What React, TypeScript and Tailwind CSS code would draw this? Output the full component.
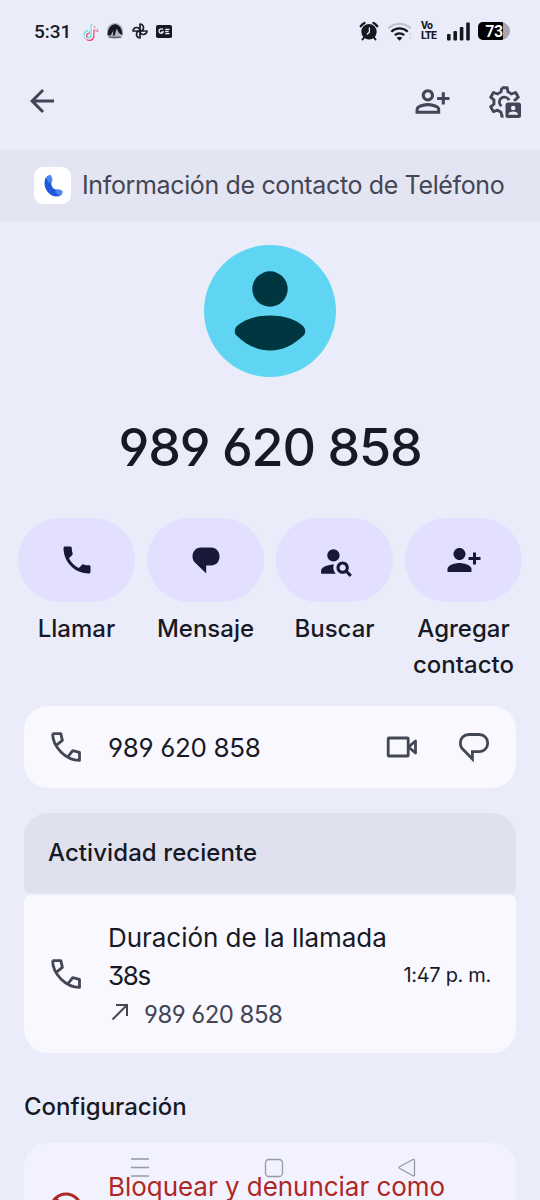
import type { ReactNode } from "react";
import {
  MdArrowBack,
  MdOutlinePersonAddAlt,
  MdPersonAddAlt1,
  MdPersonSearch,
  MdPhone,
} from "react-icons/md";

function TikTokGlyph() {
  const note = "M9.2 2v10.2a3.6 3.6 0 1 1-3.6-3.6M9.2 2c.3 2.8 2.2 4.4 4.8 4.5";
  return (
    <svg width="17" height="19" viewBox="0 0 17 19" fill="none" strokeWidth="2.3">
      <path d={note} stroke="#5fe3e6" transform="translate(0.5 .6)" />
      <path d={note} stroke="#f0476f" transform="translate(2.1 2.1)" />
      <path d={note} stroke="#f7f7fd" strokeWidth="1.5" transform="translate(1.3 1.3)" />
    </svg>
  );
}

function MountainGlyph() {
  return (
    <svg width="18" height="18" viewBox="0 0 18 18">
      <circle cx="9" cy="9" r="8" fill="#b3b5c1" />
      <path d="M1.5 13.5C1.5 7.5 4.5 2.3 9 2.3S16.5 7.5 16.5 13.5L13 11 10.6 6.5 8.7 13.5H6.8L7.5 8.5 4.5 13.5z" fill="#16171f" />
      <path d="M2.5 15.2h13" stroke="#3c3e49" strokeWidth="1" />
    </svg>
  );
}

function PinwheelGlyph() {
  const blade = "M9 9V2a3.5 3.5 0 0 1 3.5 3.5C12.5 7.6 11 9 9 9z";
  return (
    <svg width="18" height="18" viewBox="0 0 18 18" fill="none" stroke="#1b1c27" strokeWidth="1.7" strokeLinejoin="round">
      <path d={blade} />
      <path d={blade} transform="rotate(90 9 9)" />
      <path d={blade} transform="rotate(180 9 9)" />
      <path d={blade} transform="rotate(270 9 9)" />
    </svg>
  );
}

function NewsGlyph() {
  return (
    <svg width="16" height="13" viewBox="0 0 16 13" fill="none" stroke="#ebecf9" strokeWidth="1.3">
      <rect width="16" height="13" rx="1.8" fill="#171821" stroke="none" />
      <path d="M7 4.7A2.2 2.2 0 1 0 7.3 6.8H5.3M9.2 4.3h4.3M9.2 6.5h3.5M9.2 8.7h4.3" />
    </svg>
  );
}

function AlarmGlyph() {
  return (
    <svg width="20" height="20" viewBox="0 0 20 20" fill="none" stroke="#17181f" strokeLinecap="round">
      <circle cx="10" cy="10.8" r="7.7" fill="#17181f" stroke="none" />
      <path d="M1.7 5.2A13 13 0 0 1 5.5 1.9M18.3 5.2A13 13 0 0 0 14.5 1.9" strokeWidth="2.3" />
      <path d="M5 16.5l-1.5 2M15 16.5l1.5 2" strokeWidth="2" />
      <path d="M10.4 7v4.3L8.3 13" stroke="#ebecf9" strokeWidth="1.3" />
    </svg>
  );
}

function WifiGlyph() {
  return (
    <svg width="26" height="19" viewBox="0 0 26 19" fill="none" strokeWidth="2.3">
      <path d="M1.3 6.5C7.5.3 17.5.3 23.7 6.5" stroke="#c3c4d2" />
      <path d="M4.3 9.7c4.5-4.5 11.9-4.5 16.4 0" stroke="#17181f" />
      <path d="M7.8 13.3c2.6-2.6 6.8-2.6 9.4 0" stroke="#17181f" />
      <path d="M9.6 15.8c1.8-1.5 4-1.5 5.8 0l-2.9 3z" fill="#17181f" />
      <path d="M22 12.5l1.5-1.5 1.5 1.5zM22 15.5l1.5 1.5 1.5-1.5z" fill="#c3c4d2" />
    </svg>
  );
}

function SignalGlyph() {
  return (
    <svg width="23" height="19" viewBox="0 0 23 19" fill="#17181f">
      <rect y="12" width="3.6" height="6.5" rx="1" />
      <rect x="6.4" y="9" width="3.6" height="9.5" rx="1" />
      <rect x="12.8" y="5" width="3.6" height="13.5" rx="1" />
      <rect x="19.2" y="0.5" width="3.6" height="18" rx="1" />
    </svg>
  );
}

function Battery() {
  return (
    <div className="relative flex h-[18px] w-8 items-center justify-center overflow-hidden rounded-l-[5px] rounded-r-[9px] bg-[#a5a6b2]">
      <div className="absolute inset-y-0 left-0 w-[25px] bg-black" />
      <span className="relative pt-px font-['Roboto'] text-[16px] leading-none font-semibold tracking-[-0.5px] text-white">73</span>
    </div>
  );
}

function ContactSettingsIcon() {
  return (
    <svg width="34" height="34" viewBox="0 0 34 34" fill="none">
      <path
        d="M13.8 2.8h5.4l.8 4.2a10 10 0 0 1 3.4 2l4.2-1.5 2.7 4.7-3.4 2.9a10 10 0 0 1 .2 3.5M13.8 2.8l-.8 4.2a10 10 0 0 0-3.4 2L5.4 7.5 2.7 12.2l3.4 2.9a10 10 0 0 0 0 3.9l-3.4 2.9 2.7 4.7 4.2-1.5a10 10 0 0 0 3.4 2l.8 4.2h1.7"
        stroke="#434655"
        strokeWidth="2.9"
        strokeLinejoin="round"
      />
      <path d="M13.5 21.2a5 5 0 1 1 7.5-5.9" stroke="#434655" strokeWidth="2.8" />
      <path d="M16.3 16.2H34V34H16.3z" fill="#ebecf9" />
      <rect x="17.5" y="17.5" width="15.5" height="15.5" rx="2.5" fill="#434655" />
      <circle cx="25.2" cy="23" r="2.3" fill="#ebecf9" />
      <path d="M20.3 29.7c0-4.3 9.8-4.3 9.8 0z" fill="#ebecf9" />
    </svg>
  );
}

function CallOutlineIcon() {
  return (
    <svg width="30" height="30" viewBox="0 0 30 30" fill="none" stroke="#434655" strokeWidth="2.8" strokeLinejoin="round" className="shrink-0">
      <path d="M1.6 1.6H9.8L11.4 8.4L5.4 13.2M1.6 1.6C1.7 15 14.7 28.2 28.5 28.4V20.3L21.7 18.7L17 24.7" />
    </svg>
  );
}

function BubbleIcon() {
  return (
    <svg width="32" height="31" viewBox="0 0 32 31" fill="none" stroke="#434655" strokeWidth="2.8">
      <path d="M11 2.5H21C26.3 2.5 29.7 6.3 29.7 11S26.3 19.7 21 19.7H14.4V27L4.4 16.800C3 15.200 2.300 13.300 2.300 11C2.3 6.3 5.7 2.5 11 2.5z" />
    </svg>
  );
}

function BubbleFilledIcon() {
  return (
    <svg width="28" height="27" viewBox="0 0 28 27" fill="#1a1838">
      <path d="M9 .5H19C24.300.5 27.500 4.500 27.500 9.500S24.300 18.500 19 18.500H14.200V26.500L2.400 15C1.200 13.500.5 11.700.5 9.500C.5 4.500 3.700.5 9 .5z" />
    </svg>
  );
}

function VideoIcon() {
  return (
    <svg width="32" height="22" viewBox="0 0 32 22" fill="none" stroke="#434655" strokeWidth="2.8" strokeLinejoin="round">
      <rect x="2.2" y="2" width="20" height="18" rx="0.8" />
      <path d="M22.5 11l7-6v12z" />
    </svg>
  );
}

function DialerLogo() {
  return (
    <div className="flex size-[37px] items-center justify-center rounded-[9px] bg-white">
      <svg width="20" height="24" viewBox="0 0 20 24">
        <path d="M2.8 3.5C-1.2 11 4.5 22.5 14 22.5c2.5 0 4-1 5-2.5l-5-4.5c-3.5.5-6.5-4-5.5-7z" fill="#1c57dc" />
        <path d="M2.6 4C4 1.3 6 .6 7.5 1c1.5 2 2.4 4.5 1.7 6.5L6.800 9.200z" fill="#4c84f0" />
        <path d="M12 17.8l2.5-2.6c2-.1 4 .8 5.2 2.2-.2 2-1.2 3.4-3 4.5z" fill="#4c84f0" />
      </svg>
    </div>
  );
}

function Action({ icon, label }: { icon: ReactNode; label: string }) {
  return (
    <div className="flex w-[117px] flex-col items-center">
      <div className="flex h-[84px] w-full items-center justify-center rounded-[42px] bg-[#e2dfff] text-[#1a1838]">{icon}</div>
      <div className="mt-[9px] text-center text-2xl leading-9 font-medium">{label}</div>
    </div>
  );
}

export default function App() {
  return (
    <div className="relative flex h-[1200px] w-[540px] flex-col overflow-hidden bg-[#ebecf9] font-['Inter',sans-serif] text-[#171a26] [font-feature-settings:'ss01']">
      <div className="flex h-[62px] shrink-0 items-center pr-[30px] pl-[34px]">
        <span className="w-[48px] font-['Roboto'] text-[19px] leading-none font-medium">5:31</span>
        <div className="flex items-center gap-[7px]">
          <TikTokGlyph />
          <MountainGlyph />
          <PinwheelGlyph />
          <NewsGlyph />
        </div>
        <div className="ml-auto flex items-center">
          <AlarmGlyph />
          <div className="ml-2">
            <WifiGlyph />
          </div>
          <div className="ml-2 w-[18px] font-['Roboto'] text-[10.5px] leading-[10px] font-extrabold tracking-[-0.6px]">
            <div>Vo</div>
            <div>LTE</div>
          </div>
          <div className="ml-2">
            <SignalGlyph />
          </div>
          <div className="ml-2">
            <Battery />
          </div>
        </div>
      </div>

      <div className="flex h-[78px] shrink-0 items-center pr-[18px] pl-6 text-[#434655]">
        <MdArrowBack size={36} />
        <MdOutlinePersonAddAlt size={37} className="ml-auto" />
        <div className="ml-[37px] pt-px">
          <ContactSettingsIcon />
        </div>
      </div>

      <div className="mt-[10px] flex h-[71px] shrink-0 items-center gap-[10px] bg-[#e4e5f2] pl-[34px]">
        <DialerLogo />
        <span className="pt-px pl-px text-[25px] tracking-[-0.36px] whitespace-nowrap text-[#434655]">Información de contacto de Teléfono</span>
      </div>

      <div className="mt-6 flex size-[132px] shrink-0 items-center justify-center self-center rounded-full bg-[#5fd5f3]">
        <svg width="132" height="132" viewBox="0 0 132 132" fill="#00363f">
          <circle cx="66" cy="44" r="17.7" />
          <path d="M66 70.5C81 70.5 93 75 99.5 81.5C101.8 84.5 101.8 88 99.5 90.5C89 100.5 78 105.5 66 105.5S43 100.5 32.5 90.5C30.2 88 30.2 84.5 32.5 81.5C39 75 51 70.5 66 70.5z" />
        </svg>
      </div>

      <h1 className="mt-[41px] text-center text-[52px] leading-[60px] font-medium tracking-[-1.2px]">989 620 858</h1>

      <div className="mt-10 flex justify-between px-[18px]">
        <Action icon={<MdPhone size={36} />} label="Llamar" />
        <Action icon={<BubbleFilledIcon />} label="Mensaje" />
        <Action icon={<MdPersonSearch size={37} className="mt-0.5 ml-[3px]" />} label="Buscar" />
        <Action icon={<MdPersonAddAlt1 size={36} />} label="Agregar contacto" />
      </div>

      <div className="mx-6 mt-[23px] flex h-[82px] shrink-0 items-center rounded-3xl bg-[#f9f8ff] pr-[26px] pl-[27px]">
        <CallOutlineIcon />
        <span className="ml-[27px] text-[26px] tracking-[-0.35px]">989 620 858</span>
        <div className="ml-auto flex items-center gap-10">
          <VideoIcon />
          <BubbleIcon />
        </div>
      </div>

      <div className="mx-6 mt-[25px] flex h-20 shrink-0 items-center rounded-t-3xl rounded-b-md bg-[#dfe1ee] pl-6">
        <h2 className="text-2xl font-medium tracking-[0.08px]">Actividad reciente</h2>
      </div>
      <div className="mx-6 mt-[2px] flex h-[158px] shrink-0 items-center rounded-t-md rounded-b-3xl bg-[#f9f8ff] pr-[25px] pl-[27px]">
        <CallOutlineIcon />
        <div className="ml-[27px] pt-[5px] leading-[38.5px]">
          <div className="text-[26px] tracking-[-0.04px]">Duración de la llamada</div>
          <div className="text-[26px] tracking-[-1.3px]">38s</div>
          <div className="flex items-center text-2xl leading-[38.5px] tracking-[-0.55px] text-[#434655]">
            <svg width="24" height="24" viewBox="0 0 24 24" fill="none" stroke="currentColor" strokeWidth="2" className="mr-3 -mt-[7px]">
              <path d="M4.5 19.5L18.5 5.5M8 5h11v11" />
            </svg>
            989 620 858
          </div>
        </div>
        <span className="ml-auto pt-px text-xl tracking-[-0.32px] whitespace-nowrap">1:47 p. m.</span>
      </div>

      <h2 className="mt-9 ml-6 text-2xl leading-9 font-medium">Configuración</h2>

      <div className="mx-6 mt-[18px] flex h-[120px] shrink-0 rounded-3xl bg-[#f2f2fe] pl-[22px] text-[#ae2724]">
        <svg width="40" height="40" viewBox="0 0 40 40" fill="none" stroke="currentColor" strokeWidth="3" className="mt-[46px]">
          <circle cx="20" cy="20" r="15" />
          <path d="M10 10l20 20" />
        </svg>
        <span className="mt-[26px] ml-[22px] text-[26px] leading-9 tracking-[-0.04px]">Bloquear y denunciar como</span>
      </div>

      <div className="absolute inset-x-0 bottom-0 flex h-[66px] items-start pt-[24px]">
        <svg width="20" height="19" viewBox="0 0 20 19" stroke="#9798a8" strokeWidth="1.3" className="ml-[130px]">
          <path d="M1 1h18M1 9.5h18M1 18h18" />
        </svg>
        <svg width="20" height="20" viewBox="0 0 20 20" fill="none" stroke="#9798a8" strokeWidth="1.3" className="ml-[114px]">
          <rect x="1.5" y="1.5" width="17" height="17" rx="3.5" />
        </svg>
        <svg width="20" height="20" viewBox="0 0 20 20" fill="none" stroke="#9798a8" strokeWidth="1.3" strokeLinejoin="round" className="ml-[113px]">
          <path d="M16 1.5L2.5 8.8q-1 .7 0 1.4L16 17.8q1.5.5 1.5-1V2.5q0-1.5-1.5-1z" />
        </svg>
      </div>
    </div>
  );
}
